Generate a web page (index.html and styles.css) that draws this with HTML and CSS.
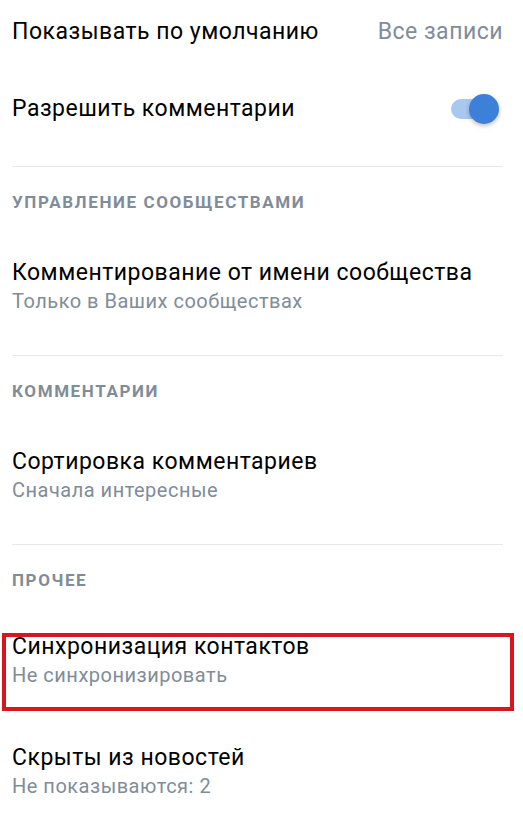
FILE: index.html
```html
<!DOCTYPE html>
<html lang="ru">
<head>
    <meta charset="UTF-8">
    <meta name="viewport" content="width=device-width, initial-scale=1.0">
    <title>Настройки</title>
    <link rel="stylesheet" href="styles.css">
</head>
<body>

<div class="settings">
    <div class="section section-first">
        <div class="row">
            <span class="row-title">Показывать по умолчанию</span>
            <span class="row-value">Все записи</span>
        </div>
        <div class="row row-switch">
            <span class="row-title">Разрешить комментарии</span>
            <span class="toggle toggle-on"><span class="toggle-thumb"></span></span>
        </div>
    </div>

    <div class="section">
        <div class="section-title">Управление сообществами</div>
        <div class="item">
            <div class="item-title">Комментирование от имени сообщества</div>
            <div class="item-sub">Только в Ваших сообществах</div>
        </div>
    </div>

    <div class="section">
        <div class="section-title">Комментарии</div>
        <div class="item">
            <div class="item-title">Сортировка комментариев</div>
            <div class="item-sub">Сначала интересные</div>
        </div>
    </div>

    <div class="section section-last">
        <div class="section-title">Прочее</div>
        <div class="item item-marked">
            <div class="item-title">Синхронизация контактов</div>
            <div class="item-sub">Не синхронизировать</div>
        </div>
        <div class="item item-after-mark">
            <div class="item-title">Скрыты из новостей</div>
            <div class="item-sub">Не показываются: 2</div>
        </div>
    </div>
</div>

</body>
</html>
```

FILE: styles.css
```css
body {
    font-family: Roboto, "Noto Sans", sans-serif;
    background-color: #fff;
    color: #000;
    margin: 0;
    padding: 0;
}
.settings {
    padding: 0 20px 0 12px;
}
.section {
    border-top: 1px solid #e7e8ec;
    padding-top: 25px;
    padding-bottom: 43px;
}
.section-first {
    border-top: none;
    padding-top: 19px;
    padding-bottom: 42px;
}
.section-last {
    padding-bottom: 30px;
}
.row {
    display: flex;
    justify-content: space-between;
    align-items: center;
    font-size: 23px;
    line-height: 26px;
    letter-spacing: 0.5px;
}
.row-switch {
    margin-top: 49px;
}
.row-value {
    color: #818c99;
}
.toggle {
    position: relative;
    width: 48px;
    height: 30px;
    margin-right: 4px;
}
.toggle::before {
    content: "";
    position: absolute;
    left: 0;
    top: 5px;
    width: 44px;
    height: 20px;
    border-radius: 10px;
    background-color: #a9c8f0;
}
.toggle-thumb {
    position: absolute;
    right: 0;
    top: 0;
    width: 30px;
    height: 30px;
    border-radius: 50%;
    background-color: #3d80da;
    box-shadow: 0 2px 4px rgba(0, 0, 0, 0.25);
}
.section-title {
    font-size: 17px;
    line-height: 20px;
    font-weight: 700;
    letter-spacing: 1.6px;
    text-transform: uppercase;
    color: #818c99;
    margin-bottom: 48px;
}
.section-last .section-title {
    margin-bottom: 44px;
}
.item-title {
    font-size: 23px;
    line-height: 26px;
    letter-spacing: 0.5px;
}
.item-sub {
    font-size: 20px;
    line-height: 22px;
    letter-spacing: 0.5px;
    margin-top: 4px;
    color: #818c99;
}
.item-marked {
    position: relative;
}
.item-marked::after {
    content: "";
    position: absolute;
    top: -1px;
    left: -10px;
    right: -11px;
    bottom: -25px;
    border: 4px solid #d8161d;
}
.item-after-mark {
    margin-top: 59px;
}
```
